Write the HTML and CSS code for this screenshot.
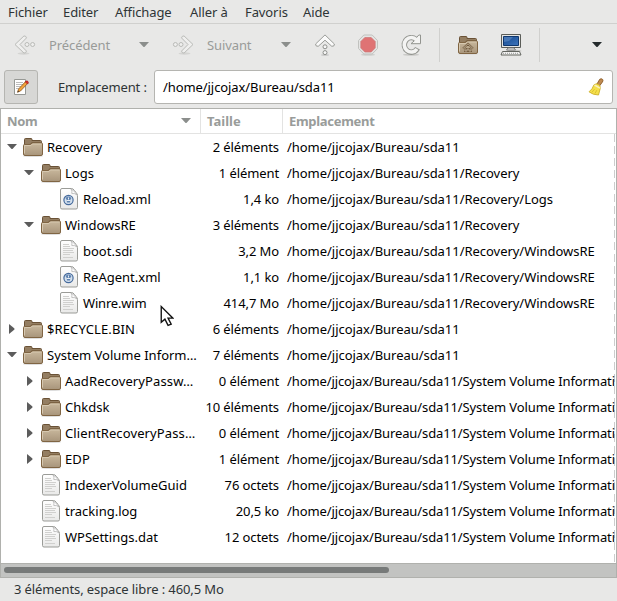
FILE: index.html
```html
<!DOCTYPE html>
<html lang="fr">
<head>
<meta charset="utf-8">
<title>sda11</title>
<link rel="stylesheet" href="styles.css">
</head>
<body>
<svg class="defs" width="0" height="0">
  <defs>
    <linearGradient id="gFolder" x1="0" y1="0" x2="0" y2="1"><stop offset="0" stop-color="#c9b89d"/><stop offset="1" stop-color="#a8957b"/></linearGradient>
    <linearGradient id="gPage" x1="0" y1="0" x2="0" y2="1"><stop offset="0" stop-color="#fff"/><stop offset="1" stop-color="#e9e9e8"/></linearGradient>
    <linearGradient id="gScreen" x1="0" y1="0" x2="1" y2="1"><stop offset="0" stop-color="#154a91"/><stop offset="1" stop-color="#3e74bb"/></linearGradient>
    <symbol id="folder" viewBox="0 0 22 22">
      <ellipse cx="11" cy="20" rx="10" ry="1" fill="#ddd"/>
      <path d="M2.500 18V3.500q0-1 1-1H9q1 0 1 1v1h8.500q1 0 1 1V18z" fill="#947e62" stroke="#6a5236"/>
      <path d="M3 8h5l2-2h9.500v3H3z" fill="#776044"/>
      <path d="M1.500 9.500q0-1 1-1H8.500l1.500-1.500h9.500q1 0 1 1V18q0 1.500-1.500 1.500H3q-1.500 0-1.500-1.500z" fill="url(#gFolder)" stroke="#806543"/>
      <path d="M2.500 17.500V9.500H9l1.500-1.500h9" fill="none" stroke="#d6c8b0"/>
    </symbol>
    <symbol id="page" viewBox="0 0 20 22">
      <path d="M1.500 2q0-1.500 1.500-1.500h9.500q1.500 0 3 2l1.500 2q1.500 1.500 1.500 3V19.500q0 1.500-1.500 1.500H3q-1.500 0-1.500-1.500z" fill="url(#gPage)" stroke="#9b9c98"/>
      <path d="M12 1q1.500 2 .8 4.500Q16 5 17.800 7 16 3 12 1z" fill="#fff" stroke="#aaa" stroke-width=".7"/>
    </symbol>
    <symbol id="text" viewBox="0 0 20 22">
      <use href="#page" width="20" height="22"/>
      <path d="M4 4.500h6M4 6.500h7M4 8.500h11M4 10.500h10M4 12.500h11M4 14.500h7M4 17.500h10" stroke="#d0d0ce" fill="none"/>
    </symbol>
    <symbol id="xml" viewBox="0 0 20 22">
      <use href="#page" width="20" height="22"/>
      <circle cx="9.500" cy="12" r="4.600" fill="#d5e1ee" stroke="#456a9c" stroke-width="1.200"/>
      <path d="M6.500 10l2-1.500h2l2 1.500-1 1.500-.5 3h-3l-.5-3z" fill="#5f83b0"/><path d="M9.500 9.500v2M7.500 12.500h4" stroke="#e6edf5"/>
    </symbol>
    <symbol id="open" viewBox="0 0 10 6"><path d="M0 0h10L5.700 4.800q-.7.600-1.400 0z" fill="currentColor"/></symbol>
    <symbol id="shut" viewBox="0 0 6 10"><path d="M0 0v10l5.200-4.300q.7-.7 0-1.400z" fill="currentColor"/></symbol>
    <symbol id="back" viewBox="0 0 22 20">
      <ellipse cx="9.500" cy="18.500" rx="6" ry="1.200" fill="#d4d4d2"/>
      <path d="M10 .9 1 9.500l9 8.600q2 .2 2.500-2L6 9.500l6.500-6.600Q12 .7 10 .9z" fill="#efefee" stroke="#b9bab7"/>
      <circle cx="13" cy="9.500" r="2" fill="#efefee" stroke="#b9bab7"/><circle cx="18.600" cy="9.500" r="2" fill="#efefee" stroke="#b9bab7"/>
    </symbol>
  </defs>
</svg>

<nav class="menubar"><span>Fichier</span><span>Editer</span><span>Affichage</span><span>Aller à</span><span>Favoris</span><span>Aide</span></nav>

<div class="toolbar">
  <div class="tool prev"><svg class="arrow"><use href="#back"/></svg><span class="label">Précédent</span><svg class="drop"><use href="#open"/></svg></div>
  <div class="tool next"><svg class="arrow flip"><use href="#back"/></svg><span class="label">Suivant</span><svg class="drop"><use href="#open"/></svg></div>
  <div class="tool icon up"><svg viewBox="0 0 22 22">
    <ellipse cx="11" cy="21" rx="4" ry="1" fill="#ccc"/>
    <path d="M11 .9 1.600 10q-.3 2.600 2.600 2.300L11 6.200l6.800 6.100q2.900.3 2.600-2.300z" fill="#fafafa" stroke="#9a9c98"/>
    <circle cx="11" cy="12.800" r="2" fill="#f7f7f7" stroke="#8d8f8b"/><circle cx="11" cy="18.600" r="2" fill="#f7f7f7" stroke="#8d8f8b"/></svg></div>
  <div class="tool icon stop"><svg viewBox="0 0 22 22">
    <ellipse cx="11" cy="20.800" rx="7" ry="1" fill="#cfcfcd"/>
    <path d="M6.800 1h8.400L20.500 6.500v8L15.200 20H6.800L1.500 14.500v-8z" fill="#e4e4e3" stroke="#c1c2bf"/>
    <path d="M7.800 3.500h6.400l4 4v6.500l-4 4H7.800l-4-4V7.500z" fill="#df7374" stroke="#cd7676" stroke-width=".7"/></svg></div>
  <div class="tool icon reload"><svg viewBox="0 0 22 22">
    <ellipse cx="11" cy="20.800" rx="8" ry="1" fill="#c9c9c7"/>
    <path d="M15.800 5.300A7 7.300 0 1 0 17.500 14.300" fill="none" stroke="#92948f" stroke-width="5.400"/>
    <path d="M11 9.700h9.500V1h-1.700l-2 2.200-1.800 3z" fill="#f4f4f3" stroke="#92948f"/>
    <path d="M16.500 5.900A7 7.300 0 1 0 17 14.900" fill="none" stroke="#f4f4f3" stroke-width="3.600"/></svg></div>
  <i class="sep"></i>
  <div class="tool icon home"><svg viewBox="0 0 22 22"><use href="#folder"/>
    <path d="M6 14.500l5-4.700 5 4.700M8 13.500V17h2v-2h2v2h2v-3.500" fill="none" stroke="#6f573a" stroke-width="1.800"/><path d="M6 14.500l5-4.700 5 4.700M8 13.500V17h2v-2h2v2h2v-3.500" fill="none" stroke="#d9ccb5" stroke-width=".7"/></svg></div>
  <div class="tool icon computer"><svg viewBox="0 0 22 22">
    <ellipse cx="14" cy="17" rx="7.500" ry="1.500" fill="#c5c5c2"/>
    <path d="M1.500.5h19v13h-19z" fill="#e6e6e4" stroke="#5b5d59"/><path d="M3.500 2.500h15v9h-15z" fill="url(#gScreen)" stroke="#10386f"/>
    <path d="M4 3h9l-4 4-5 1z" fill="#5e8ac4" opacity=".65"/>
    <path d="M8 14h6l1.500 2h-9z" fill="#fff" stroke="#777"/><path d="M2.500 17.500h17l1.500 3.500H1z" fill="#f3f3f2" stroke="#62645f"/><path d="M3 19.300h16" stroke="#999" stroke-dasharray="1 1"/></svg></div>
  <i class="sep"></i>
  <svg class="drop dark"><use href="#open"/></svg>
</div>

<div class="location">
  <div class="toggle"><svg viewBox="0 0 16 16">
    <path d="M1.500.5h11v15h-11z" fill="#fff" stroke="#969894"/><path d="M3 3.500h7M3 5.500h7M3 7.500h5M3 9.500h3" stroke="#bbb"/>
    <path d="M12.800 2.300l2 2L7.500 12l-3 1.300 1-3.200z" fill="#f2a33b" stroke="#8d5923" stroke-width=".8"/><path d="M12.200 2.800q2-2 3 0 .8 1-.8 2.300z" fill="#d9302d" stroke="#a51c1c" stroke-width=".6"/><path d="M4.500 13.300l1.700-.8-1-1z" fill="#333"/></svg></div>
  <label>Emplacement :</label>
  <div class="field"><span>/home/jjcojax/Bureau/sda11</span><svg viewBox="0 0 16 18">
    <path d="M9 6l2.700-4.700q1.500-1.300 3 .2.700 1.300-.3 2.500L11.500 8z" fill="#c08a50" stroke="#8a5a26" stroke-width=".9"/>
    <path d="M6 6.800q2.500-1.800 4.700-.3 2 1.500 1.500 4L10.500 17Q5 17 1 13.800 4.500 11.300 6 6.800z" fill="#f5e04a" stroke="#cdb02c" stroke-width=".9"/>
    <path d="M6.500 7l5.500 3.200" stroke="#f8f0c0" stroke-width="1.500"/><path d="M4 14.200l2.500-3M7 15.500l1.800-3.300" stroke="#d4b828" fill="none" stroke-width=".8"/></svg></div>
</div>

<main class="list">
  <div class="head"><div class="c1">Nom<svg class="drop"><use href="#open"/></svg></div><div class="c2">Taille</div><div class="c3">Emplacement</div></div>
  <div class="rows">
    <div class="row"><div class="name"><svg class="open"><use href="#open"/></svg><svg class="folder"><use href="#folder"/></svg><span>Recovery</span></div><span class="size">2 éléments</span><span class="path">/home/jjcojax/Bureau/sda11</span></div>
    <div class="row"><div class="name l1"><svg class="open"><use href="#open"/></svg><svg class="folder"><use href="#folder"/></svg><span>Logs</span></div><span class="size">1 élément</span><span class="path">/home/jjcojax/Bureau/sda11/Recovery</span></div>
    <div class="row"><div class="name l2"><svg class="file"><use href="#xml"/></svg><span>Reload.xml</span></div><span class="size">1,4 ko</span><span class="path">/home/jjcojax/Bureau/sda11/Recovery/Logs</span></div>
    <div class="row"><div class="name l1"><svg class="open"><use href="#open"/></svg><svg class="folder"><use href="#folder"/></svg><span>WindowsRE</span></div><span class="size">3 éléments</span><span class="path">/home/jjcojax/Bureau/sda11/Recovery</span></div>
    <div class="row"><div class="name l2"><svg class="file"><use href="#text"/></svg><span>boot.sdi</span></div><span class="size">3,2 Mo</span><span class="path">/home/jjcojax/Bureau/sda11/Recovery/WindowsRE</span></div>
    <div class="row"><div class="name l2"><svg class="file"><use href="#xml"/></svg><span>ReAgent.xml</span></div><span class="size">1,1 ko</span><span class="path">/home/jjcojax/Bureau/sda11/Recovery/WindowsRE</span></div>
    <div class="row"><div class="name l2"><svg class="file"><use href="#text"/></svg><span class="tight">Winre.wim</span></div><span class="size">414,7 Mo</span><span class="path">/home/jjcojax/Bureau/sda11/Recovery/WindowsRE</span></div>
    <div class="row"><div class="name"><svg class="shut"><use href="#shut"/></svg><svg class="folder"><use href="#folder"/></svg><span class="wide">$RECYCLE.BIN</span></div><span class="size">6 éléments</span><span class="path">/home/jjcojax/Bureau/sda11</span></div>
    <div class="row"><div class="name"><svg class="open"><use href="#open"/></svg><svg class="folder"><use href="#folder"/></svg><span>System Volume Inform…</span></div><span class="size">7 éléments</span><span class="path">/home/jjcojax/Bureau/sda11</span></div>
    <div class="row"><div class="name l1"><svg class="shut"><use href="#shut"/></svg><svg class="folder"><use href="#folder"/></svg><span class="wide">AadRecoveryPassw…</span></div><span class="size">0 élément</span><span class="path deep">/home/jjcojax/Bureau/sda11/System Volume Informati</span></div>
    <div class="row"><div class="name l1"><svg class="shut"><use href="#shut"/></svg><svg class="folder"><use href="#folder"/></svg><span>Chkdsk</span></div><span class="size">10 éléments</span><span class="path deep">/home/jjcojax/Bureau/sda11/System Volume Informati</span></div>
    <div class="row"><div class="name l1"><svg class="shut"><use href="#shut"/></svg><svg class="folder"><use href="#folder"/></svg><span class="wide">ClientRecoveryPass…</span></div><span class="size">0 élément</span><span class="path deep">/home/jjcojax/Bureau/sda11/System Volume Informati</span></div>
    <div class="row"><div class="name l1"><svg class="shut"><use href="#shut"/></svg><svg class="folder"><use href="#folder"/></svg><span class="wide">EDP</span></div><span class="size">1 élément</span><span class="path deep">/home/jjcojax/Bureau/sda11/System Volume Informati</span></div>
    <div class="row"><div class="name l1f"><svg class="file"><use href="#text"/></svg><span>IndexerVolumeGuid</span></div><span class="size">76 octets</span><span class="path deep">/home/jjcojax/Bureau/sda11/System Volume Informati</span></div>
    <div class="row"><div class="name l1f"><svg class="file"><use href="#text"/></svg><span>tracking.log</span></div><span class="size">20,5 ko</span><span class="path deep">/home/jjcojax/Bureau/sda11/System Volume Informati</span></div>
    <div class="row"><div class="name l1f"><svg class="file"><use href="#text"/></svg><span>WPSettings.dat</span></div><span class="size">12 octets</span><span class="path deep">/home/jjcojax/Bureau/sda11/System Volume Informati</span></div>
  </div>
  <div class="scroll"><div class="thumb"></div></div>
</main>
<footer>3 éléments, espace libre : 460,5 Mo</footer>
<svg class="cursor" viewBox="0 0 13 21"><path d="M1 1.500v15l3.500-3 3 6 3-1.300-3-5.700H12z" fill="#fff" stroke="#111" stroke-width="1.300"/></svg>
</body>
</html>
```
FILE: styles.css
```css
* { box-sizing: border-box; }
body { margin: 0; width: 617px; height: 601px; overflow: hidden; background: #e8e8e7; color: #2e3436; font: 13px/20px "Noto Sans", sans-serif; display: flex; flex-direction: column; }
svg { display: block; flex: none; }
.defs { position: absolute; }
.menubar { height: 24px; flex: none; display: grid; grid-template-columns: 55px 52px 75px 55px 58px auto; padding: 2px 0 0 8px; border-bottom: 1px solid #d0d0ce; white-space: nowrap; letter-spacing: -.1px; }
.toolbar { height: 43px; flex: none; display: flex; align-items: center; padding-bottom: 1px; color: #999b99; }
.tool { display: flex; align-items: center; flex: none; }
.prev { width: 149px; margin-left: 14px; }
.next { width: 149px; margin-left: 9px; }
.arrow { width: 22px; height: 20px; }
.flip { transform: scaleX(-1); }
.label { width: 90px; margin-left: 13px; white-space: nowrap; letter-spacing: -.1px; }
.next .label { width: 74px; }
.drop { width: 10px; height: 6px; color: #8b8e8c; }
.icon { width: 22px; }
.icon svg { width: 22px; height: 22px; }
.up { margin-left: -7px; }
.stop { margin-left: 21px; }
.reload { margin-left: 21px; }
.sep { width: 1px; height: 34px; background: #d0d0ce; margin-left: 17px; flex: none; }
.home { margin-left: 17px; }
.computer { margin-left: 21px; }
.dark { color: #252b2d; margin-left: 52px; }
.location { height: 41px; flex: none; display: flex; align-items: flex-start; padding: 3px 4px 0; }
.toggle { width: 34px; height: 34px; border: 1px solid #b5b5b1; border-radius: 3px; background: #d7d7d5; display: flex; align-items: center; justify-content: center; }
.toggle svg { width: 16px; height: 16px; }
.location label { width: 116px; padding: 7px 0 0 20px; white-space: nowrap; letter-spacing: -.15px; }
.field { flex: 1; height: 34px; border: 1px solid #b5b5b1; border-radius: 3px; background: #fff; display: flex; align-items: center; justify-content: space-between; padding: 0 8px; color: #000; letter-spacing: -.08px; }
.field svg { width: 16px; height: 18px; }
.list { height: 470px; flex: none; border: 1px solid #b0b1ad; background: #fff; color: #000; display: flex; flex-direction: column; }
.head { height: 25px; flex: none; display: flex; border-bottom: 1px solid #e3e3e2; color: #999c9a; font-weight: 700; line-height: 24px; letter-spacing: -.3px; }
.c1 { width: 200px; padding: 0 9px 0 6px; border-right: 1px solid #e3e3e2; display: flex; align-items: center; justify-content: space-between; }
.c2 { width: 82px; padding-left: 6px; border-right: 1px solid #e3e3e2; letter-spacing: 0; }
.c3 { padding-left: 6px; }
.rows { flex: 1; overflow: hidden; background: repeating-linear-gradient(#ccc 0 8px, transparent 8px 12px) 613px top / 1px 100% no-repeat; }
.row { height: 26px; display: grid; grid-template-columns: 196px 82px 337px; align-items: center; white-space: nowrap; }
.name { display: flex; align-items: center; padding-left: 6px; }
.name span { margin-left: 3px; }
.name .file + span { margin-left: 4px; }
.tight { letter-spacing: -.2px; }
.wide { letter-spacing: .12px; }
.l1 { padding-left: 24px; }
.l2 { padding-left: 58px; }
.l1f { padding-left: 40px; }
.open { width: 10px; height: 6px; margin-right: 5px; color: #5c5c5c; }
.l1 .open { margin: 0 6px 0 -1px; }
.shut { width: 6px; height: 10px; margin: 0 7px 0 2px; color: #5c5c5c; }
.folder { width: 22px; height: 22px; }
.file { width: 20px; height: 22px; }
.size { text-align: right; letter-spacing: -.1px; }
.path { padding-left: 8px; letter-spacing: -.04px; }
.deep { letter-spacing: -.11px; }
.scroll { height: 14px; flex: none; background: #c2c3c1; border-top: 1px solid #b0b1ad; padding: 3px 3px; }
.thumb { width: 385px; height: 6px; border-radius: 3px; background: #777a79; }
footer { padding: 1px 14px 0; white-space: nowrap; letter-spacing: -.11px; }
.cursor { position: absolute; left: 160px; top: 305px; width: 14px; height: 22px; }
```
